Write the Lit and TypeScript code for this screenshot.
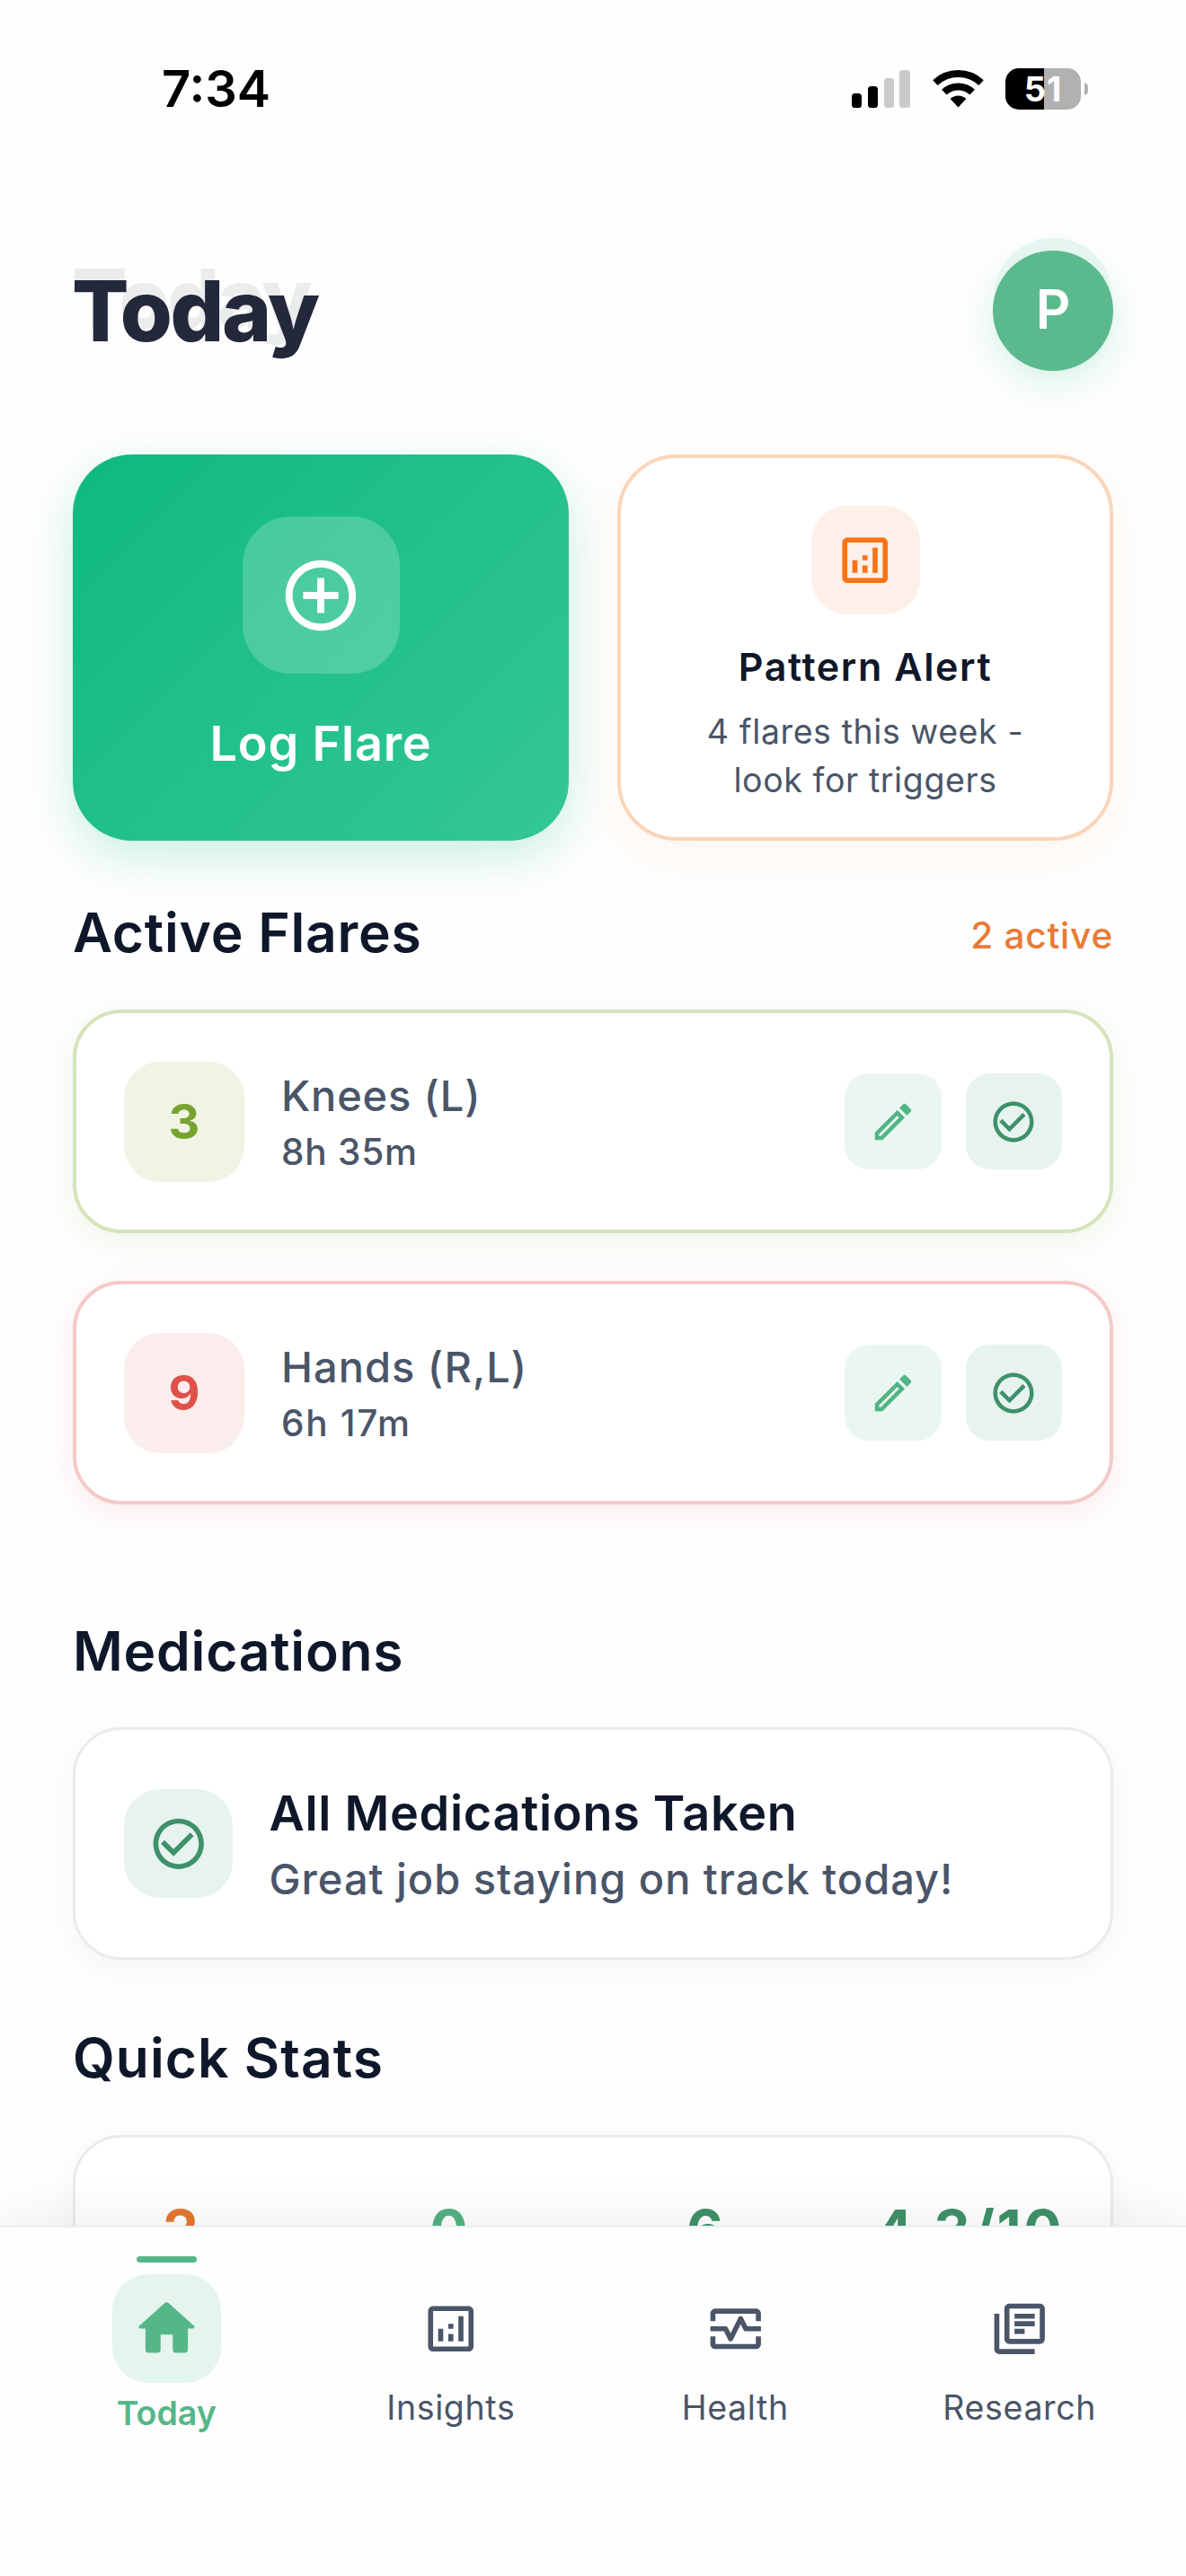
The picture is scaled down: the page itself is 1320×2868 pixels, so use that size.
import { LitElement, html, css, svg } from "lit";
import { customElement, property } from "lit/decorators.js";
import { classMap } from "lit/directives/class-map.js";

const ICONS: Record<string, string> = {
  add: "M13 7h-2v4H7v2h4v4h2v-4h4v-2h-4V7zm-1-5C6.48 2 2 6.48 2 12s4.48 10 10 10 10-4.48 10-10S17.52 2 12 2zm0 18c-4.41 0-8-3.59-8-8s3.59-8 8-8 8 3.59 8 8-3.59 8-8 8z",
  analytics:
    "M19 3H5c-1.1 0-2 .9-2 2v14c0 1.1.9 2 2 2h14c1.1 0 2-.9 2-2V5c0-1.1-.9-2-2-2zm0 16H5V5h14v14zM7 12h2v5H7zM15 7h2v10h-2zM11 14h2v3h-2zM11 10h2v2h-2z",
  edit: "M14.06 9.02l.92.92L5.92 19H5v-.92l9.06-9.06M17.66 3c-.25 0-.51.1-.7.29l-1.83 1.83 3.75 3.75 1.83-1.83c.39-.39.39-1.02 0-1.41l-2.34-2.34c-.2-.2-.45-.29-.71-.29zm-3.6 3.19L3 17.25V21h3.75L17.81 9.94l-3.75-3.75z",
  check:
    "M16.59 7.58L10 14.17l-3.59-3.58L5 12l5 5 8-8zM12 2C6.48 2 2 6.48 2 12s4.48 10 10 10 10-4.48 10-10S17.52 2 12 2zm0 18c-4.42 0-8-3.58-8-8s3.58-8 8-8 8 3.58 8 8-3.58 8-8 8z",
  home: "M10 19v-5h4v5c0 .55.45 1 1 1h3c.55 0 1-.45 1-1v-7h1.7c.46 0 .68-.57.33-.87L12.67 3.6c-.38-.34-.96-.34-1.34 0l-8.36 7.53c-.34.3-.13.87.33.87H5v7c0 .55.45 1 1 1h3c.55 0 1-.45 1-1z",
  health:
    "M20 4H4c-1.1 0-2 .9-2 2v3h2V6h16v3h2V6c0-1.1-.9-2-2-2zM20 18H4v-3H2v3c0 1.1.9 2 2 2h16c1.1 0 2-.9 2-2v-3h-2v3zM14.89 7.55c-.34-.68-1.45-.68-1.79 0L10 13.76l-1.11-2.21C8.72 11.21 8.38 11 8 11H2v2h5.38l1.72 3.45c.18.34.52.55.9.55s.72-.21.89-.55L14 10.24l1.11 2.21c.17.34.51.55.89.55h6v-2h-5.38l-1.73-3.45z",
  research:
    "M4 6H2v14c0 1.1.9 2 2 2h14v-2H4V6zm16-4H8c-1.1 0-2 .9-2 2v12c0 1.1.9 2 2 2h12c1.1 0 2-.9 2-2V4c0-1.1-.9-2-2-2zm0 14H8V4h12v12zM10 9h8v2h-8zM10 12h4v2h-4zM10 6h8v2h-8z",
};

@customElement("ui-icon")
class UiIcon extends LitElement {
  @property() name = "";
  static styles = css`
    :host { display: block; width: 67.5px; height: 67.5px; }
    svg { display: block; width: 100%; height: 100%; fill: currentColor; }
  `;
  render() {
    return html`<svg viewBox="0 0 24 24">${svg`<path d=${ICONS[this.name]}></path>`}</svg>`;
  }
}

@customElement("status-bar")
class StatusBar extends LitElement {
  static styles = css`
    :host { display: flex; align-items: center; justify-content: space-between; height: 197px; padding: 0 109px 0 180px; flex: none; }
    .time { font-size: 56px; font-weight: 600; line-height: 68px; color: #000; }
    .right { display: flex; align-items: center; gap: 24.5px; }
    .bars { display: flex; align-items: flex-end; gap: 6.3px; height: 42px; }
    .bar { width: 11.6px; border-radius: 3.6px; background: #000; }
    .b1 { height: 16px; } .b2 { height: 24px; } .b3 { height: 33px; } .b4 { height: 42px; }
    .off { background: #cacaca; }
    svg { display: block; }
    .battery { display: flex; align-items: center; gap: 3.5px; }
    .cell { width: 84px; height: 46px; border-radius: 15px; background: linear-gradient(90deg, #000 51%, #b1b1b1 51%); color: #fff; font-size: 38px; font-weight: 700; line-height: 46px; text-align: center; letter-spacing: 1px; }
    .nub { width: 4.5px; height: 14px; border-radius: 0 5px 5px 0 / 0 7px 7px 0; background: #b1b1b1; }
  `;
  render() {
    return html`
      <div class="time">7:34</div>
      <div class="right">
        <div class="bars">
          <div class="bar b1"></div><div class="bar b2"></div><div class="bar b3 off"></div><div class="bar b4 off"></div>
        </div>
        <svg width="57" height="42" viewBox="0 0 57 42">
          <path d="M2.9 14.1A37.5 37.5 0 0 1 54.1 14.1M12.8 24.7A23 23 0 0 1 44.2 24.7" fill="none" stroke="#000" stroke-width="8"></path>
          <path d="M28.5 41.5L19.6 32A13 13 0 0 1 37.4 32Z"></path>
        </svg>
        <div class="battery"><div class="cell">51</div><div class="nub"></div></div>
      </div>
    `;
  }
}

@customElement("flare-card")
class FlareCard extends LitElement {
  @property() level = "";
  @property() joint = "";
  @property() duration = "";
  @property() tone = "mild";
  static styles = css`
    :host { display: block; }
    .card { box-sizing: border-box; height: 249px; display: flex; align-items: center; padding: 0 53px; border: 4px solid; border-radius: 54px; background: #fff; }
    .mild { border-color: #d5e4bb; box-shadow: 0 9px 36px rgba(120, 163, 47, 0.1); }
    .severe { border-color: #f5c9c8; box-shadow: 0 9px 36px rgba(223, 81, 74, 0.1); }
    .badge { width: 134px; height: 134px; border-radius: 40px; display: flex; align-items: center; justify-content: center; font-size: 54px; font-weight: 700; }
    .mild .badge { background: #f0f4e5; color: #77a32f; }
    .severe .badge { background: #fbedec; color: #df514a; }
    .text { flex: 1; margin-left: 41px; padding-top: 4px; color: #4a5568; font-weight: 500; }
    .joint { font-size: 47px; line-height: 60px; letter-spacing: 0.8px; }
    .dur { margin-top: 5px; font-size: 40.5px; line-height: 56px; letter-spacing: 0.8px; }
    .severe .joint { letter-spacing: 1px; }
    .severe .dur { letter-spacing: 1.7px; }
    .actions { display: flex; gap: 27px; }
    .btn { width: 107.5px; height: 107.5px; border-radius: 27px; display: flex; align-items: center; justify-content: center; }
    .btn ui-icon { width: 54px; height: 54px; }
    .edit { background: #eaf6f2; color: #52b586; }
    .done { background: #e7f3ef; color: #3e9169; }
  `;
  render() {
    return html`
      <div class=${classMap({ card: true, [this.tone]: true })}>
        <div class="badge">${this.level}</div>
        <div class="text">
          <div class="joint">${this.joint}</div>
          <div class="dur">${this.duration}</div>
        </div>
        <div class="actions">
          <div class="btn edit"><ui-icon name="edit"></ui-icon></div>
          <div class="btn done"><ui-icon name="check"></ui-icon></div>
        </div>
      </div>
    `;
  }
}

@customElement("nav-bar")
class NavBar extends LitElement {
  static styles = css`
    :host { position: relative; box-sizing: border-box; display: grid; grid-template-columns: repeat(4, 1fr); align-items: start; height: 390px; padding: 32px 27px 0; border-top: 2px solid #edeff2; background: #fefefe; box-shadow: 0 -6px 60px rgba(0, 0, 0, 0.07); flex: none; }
    .item { display: flex; flex-direction: column; align-items: center; color: #4a5568; }
    .mark { width: 67px; height: 7px; border-radius: 3.5px; }
    .box { width: 121px; height: 121px; margin-top: 13px; border-radius: 40px; display: flex; align-items: center; justify-content: center; }
    .label { margin-top: 4.5px; font-size: 37.5px; line-height: 46px; letter-spacing: 0.65px; }
    .active { color: #55b787; }
    .active .mark { background: #55b787; }
    .active .box { background: #e4f5ee; }
    .active ui-icon { width: 81px; height: 81px; }
    .active .label { margin-top: 11px; font-weight: 600; letter-spacing: 0; }
  `;
  render() {
    const items = [
      ["home", "Today"],
      ["analytics", "Insights"],
      ["health", "Health"],
      ["research", "Research"],
    ];
    return items.map(
      ([icon, label], i) => html`
        <div class=${classMap({ item: true, active: i === 0 })}>
          <div class="mark"></div>
          <div class="box"><ui-icon name=${icon}></ui-icon></div>
          <div class="label">${label}</div>
        </div>
      `
    );
  }
}

@customElement("app-root")
class AppRoot extends LitElement {
  static styles = css`
    :host { display: flex; flex-direction: column; width: 1320px; height: 2868px; overflow: hidden; background: #fefefe; font-family: "Inter", "Liberation Sans", sans-serif; color: #0f172a; }
    .scroll { flex: 1; min-height: 0; overflow: hidden; padding: 82px 81px 0; }
    .header { display: flex; align-items: center; justify-content: space-between; height: 134px; }
    .title { position: relative; z-index: 0; font-size: 94px; font-weight: 800; line-height: 112px; letter-spacing: -2.5px; color: #23283a; margin-left: -1px; }
    .title-echo { position: absolute; z-index: -1; left: 0; top: -14px; font-size: 91px; color: #ebecec; letter-spacing: -2.3px; }
    .avatar { position: relative; z-index: 0; width: 134px; height: 134px; border-radius: 50%; box-shadow: 0 12px 44px rgba(16, 185, 129, 0.18); }
    .avatar-echo { position: absolute; z-index: -1; left: 1px; top: -14px; width: 132px; height: 132px; border-radius: 50%; background: #e5f5ef; }
    .avatar-face { height: 134px; border-radius: 50%; background: #5bba8d; color: #fff; font-size: 60px; font-weight: 600; line-height: 130px; text-align: center; }
    .tiles { display: grid; grid-template-columns: 1fr 1fr; gap: 54px; margin-top: 93px; }
    .tile { box-sizing: border-box; height: 430px; border-radius: 66px; display: flex; flex-direction: column; align-items: center; text-align: center; }
    .log { padding-top: 69px; background: linear-gradient(135deg, #10b981, #34c796); color: #fff; box-shadow: 0 18px 54px rgba(16, 185, 129, 0.22); }
    .log-box { width: 175px; height: 175px; border-radius: 54px; background: rgba(255, 255, 255, 0.2); display: flex; align-items: center; justify-content: center; }
    .log-box ui-icon { width: 94px; height: 94px; }
    .log-label { margin-top: 45px; font-size: 54px; font-weight: 600; line-height: 66px; letter-spacing: 0.8px; }
    .alert { padding-top: 53px; border: 4px solid #fbd5b9; background: #fff; box-shadow: 0 18px 54px rgba(249, 140, 42, 0.07); }
    .alert-box { width: 121px; height: 121px; border-radius: 40px; background: #fdf0e8; color: #f97316; display: flex; align-items: center; justify-content: center; }
    .alert-title { margin-top: 32px; font-size: 43px; font-weight: 600; line-height: 52px; letter-spacing: 1.6px; }
    .alert-text { margin-top: 20px; width: 400px; font-size: 37.5px; line-height: 53.7px; letter-spacing: 0.6px; color: #4a5568; }
    .heading { display: flex; align-items: center; justify-content: space-between; height: 73px; font-size: 60.5px; font-weight: 600; line-height: 73px; letter-spacing: 0.75px; color: #0f172a; }
    .h-active { margin-top: 65.5px; }
    .h-meds { margin-top: 126.5px; }
    .h-stats { margin-top: 73px; letter-spacing: 1.05px; }
    .count { padding-top: 6px; font-size: 40.5px; font-weight: 500; letter-spacing: 0.8px; color: #e97a34; }
    .flares { margin-top: 49.5px; display: flex; flex-direction: column; gap: 53px; }
    .panel { box-sizing: border-box; margin-top: 48.5px; border: 3px solid #eaeaf0; border-radius: 54px; background: #fff; box-shadow: 0 9px 36px rgba(0, 0, 0, 0.045); }
    .meds { height: 259px; padding: 0 54px; display: flex; align-items: center; }
    .meds-box { width: 121px; height: 121px; border-radius: 40px; background: #e7f3ef; color: #3e9169; display: flex; align-items: center; justify-content: center; }
    .meds-text { margin-left: 40.5px; padding-top: 2px; }
    .meds-title { font-size: 54px; font-weight: 600; line-height: 66px; letter-spacing: 0.7px; }
    .meds-sub { margin-top: 10px; font-size: 47px; font-weight: 500; line-height: 60px; letter-spacing: 0.97px; color: #4a5568; }
    .stats { height: 330px; padding: 65px 54px 0; display: flex; justify-content: space-between; font-size: 63px; font-weight: 700; line-height: 76px; text-align: center; color: #3f9168; }
    .stat { width: 126px; }
    .s2 { width: 191px; color: #52b283; }
    .s3 { width: 99px; }
    .s4 { width: 208px; letter-spacing: 2.6px; }
    .s1 { color: #e57832; }
  `;
  render() {
    return html`
      <status-bar></status-bar>
      <div class="scroll">
        <div class="header">
          <div class="title"><span class="title-echo" aria-hidden="true">Today</span>Today</div>
          <div class="avatar"><div class="avatar-echo"></div><div class="avatar-face">P</div></div>
        </div>
        <div class="tiles">
          <div class="tile log">
            <div class="log-box"><ui-icon name="add"></ui-icon></div>
            <div class="log-label">Log Flare</div>
          </div>
          <div class="tile alert">
            <div class="alert-box"><ui-icon name="analytics"></ui-icon></div>
            <div class="alert-title">Pattern Alert</div>
            <div class="alert-text">4 flares this week - look for triggers</div>
          </div>
        </div>
        <div class="heading h-active"><span>Active Flares</span><span class="count">2 active</span></div>
        <div class="flares">
          <flare-card tone="mild" level="3" joint="Knees (L)" duration="8h 35m"></flare-card>
          <flare-card tone="severe" level="9" joint="Hands (R,L)" duration="6h 17m"></flare-card>
        </div>
        <div class="heading h-meds">Medications</div>
        <div class="panel meds">
          <div class="meds-box"><ui-icon name="check"></ui-icon></div>
          <div class="meds-text">
            <div class="meds-title">All Medications Taken</div>
            <div class="meds-sub">Great job staying on track today!</div>
          </div>
        </div>
        <div class="heading h-stats">Quick Stats</div>
        <div class="panel stats">
          <div class="stat s1">2</div>
          <div class="stat s2">0</div>
          <div class="stat s3">6</div>
          <div class="stat s4">4.3/10</div>
        </div>
      </div>
      <nav-bar></nav-bar>
    `;
  }
}
